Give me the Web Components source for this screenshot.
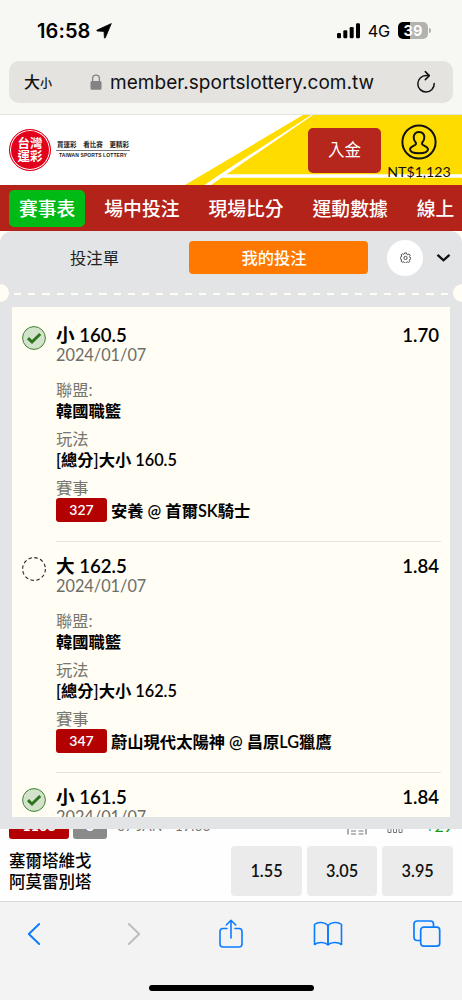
<!DOCTYPE html>
<html lang="zh-Hant">
<head>
<meta charset="utf-8">
<meta name="viewport" content="width=device-width, initial-scale=1">
<title>台灣運彩</title>
<style>
  body {
    margin: 0;
    width: 462px;
    height: 1000px;
    overflow: hidden;
    background: #fff;
    color: #0b0b0b;
    font-family: Lato, "Noto Sans CJK TC", sans-serif;
  }
</style>
</head>
<body>
<phone-screen>
  <status-bar slot="top" time="16:58" network="4G" battery="39"></status-bar>
  <address-bar slot="top">member.sportslottery.com.tw</address-bar>

  <site-header balance="NT$1,123">入金</site-header>
  <site-nav>
    <nav-item active>賽事表</nav-item>
    <nav-item>場中投注</nav-item>
    <nav-item>現場比分</nav-item>
    <nav-item>運動數據</nav-item>
    <nav-item>線上</nav-item>
  </site-nav>

  <bet-panel>
    <bet-item status="won" pick="小 160.5" odds="1.70" date="2024/01/07" league="韓國職籃" market="[總分]大小 160.5" code="327">安養 @ 首爾SK騎士</bet-item>
    <bet-item status="open" pick="大 162.5" odds="1.84" date="2024/01/07" league="韓國職籃" market="[總分]大小 162.5" code="347">蔚山現代太陽神 @ 昌原LG獵鷹</bet-item>
    <bet-item status="won" pick="小 161.5" odds="1.84" date="2024/01/07"></bet-item>
  </bet-panel>

  <match-row code="1103" count="3" time="07 JAN - 19:00" more="+29">
    <span slot="home">塞爾塔維戈</span>
    <span slot="away">阿莫雷別塔</span>
    <odds-button>1.55</odds-button>
    <odds-button>3.05</odds-button>
    <odds-button>3.95</odds-button>
  </match-row>

  <browser-toolbar slot="bottom"></browser-toolbar>
</phone-screen>

<script>
const ICONS = {
  location: ['0 0 16 16', '<path d="M15.300 .6 9.300 14.800c-.2.500-.9.400-.9-.1L8 8.400 1.200 8c-.5 0-.6-.7-.1-.9z" fill="currentColor" stroke="currentColor" stroke-width=".8" stroke-linejoin="round"/>'],
  signal: ['0 0 24 16', '<g fill="currentColor"><rect x="0" y="10" width="4" height="5.300" rx="1.200"/><rect x="6.300" y="7.300" width="4" height="8" rx="1.200"/><rect x="12.700" y="4" width="4" height="11.300" rx="1.200"/><rect x="19" y=".3" width="4" height="15" rx="1.200"/></g>'],
  lock: ['0 0 12 16', '<path d="M2.600 7.500V4.500a3.400 3.400 0 0 1 6.800 0v3" fill="none" stroke="currentColor" stroke-width="1.300"/><rect x=".5" y="7" width="11" height="8.700" rx="1.500" fill="currentColor"/>'],
  reload: ['0 0 20 24', '<g fill="none" stroke="currentColor" stroke-width="1.500" stroke-linecap="round" stroke-linejoin="round"><path d="M13 5.600H10.200A8.200 8.200 0 1 0 18.200 13.500"/><path d="M9.300 1.600 13.300 5.600 9.300 9.600"/></g>'],
  user: ['0 0 36 36', '<g fill="none" stroke="currentColor" stroke-width="2"><circle cx="18" cy="18" r="16.600"/><path d="M18 8c-3.600 0-5.300 2.500-5.300 5.500 0 2.200.9 3.700 1.900 4.900.7.900.4 2-.5 2.600-2.300 1.300-5.100 2-5.100 4.300 0 2.500 4 4 9 4s9-1.500 9-4c0-2.300-2.800-3-5.100-4.300-.9-.6-1.200-1.700-.5-2.600 1-1.200 1.900-2.700 1.900-4.900C23.300 10.500 21.600 8 18 8z"/></g>'],
  gear: ['0 0 24 24', '<g fill="none" stroke="currentColor" stroke-width="2" stroke-linejoin="round"><path d="M10 2h4l.8 3 2 .9 2.700-1.600 2.700 2.900-1.500 2.500.8 2.100 2.200.6v3l-2.500.8-.9 2 1.200 2.200-2.800 2.400-2.300-1.300-2.200.9-.7 2.100h-3.500l-.8-2.400-2-.9-2.300 1.300-2.700-2.600 1.300-2.400-.9-2.100-2.100-.6v-3.400l2.400-.7.900-2.100-1.300-2.400 2.700-2.500 2.300 1.300 2-.8z"/><circle cx="12" cy="13" r="3.600"/></g>'],
  chevron: ['0 0 14 10', '<path d="M1 1.800 7 7.300l6-5.500" fill="none" stroke="currentColor" stroke-width="2.300"/>'],
  won: ['0 0 24 24', '<circle cx="12" cy="12" r="11.400" fill="#d3e2cb" stroke="#3b8430"/><path d="M6 12.200 10 16l8.200-8" fill="none" stroke="#2e741f" stroke-width="3"/>'],
  open: ['0 0 24 24', '<circle cx="12" cy="12" r="11.400" fill="none" stroke="#222" stroke-width="1.100" stroke-dasharray="3.500 2.468"/>'],
  field: ['0 0 20 20', '<path d="M1 4v15.500M19 4v15.500M4 16h5M11.500 16h5M4 19h5M11.500 19h5" fill="none" stroke="currentColor" stroke-width="1.200"/>'],
  stats: ['0 0 16 20', '<path d="M1 8v9.500h3V8M6.500 5v12.500h3V5M12 8v9.500h3V8" fill="none" stroke="currentColor" stroke-width="1"/>'],
  back: ['0 0 14 24', '<path d="M12.200 2 1.800 12l10.400 10" fill="none" stroke="currentColor" stroke-width="1.900" stroke-linecap="round" stroke-linejoin="round"/>'],
  forward: ['0 0 14 24', '<path d="M1.800 2 12.200 12 1.800 22" fill="none" stroke="currentColor" stroke-width="1.900" stroke-linecap="round" stroke-linejoin="round"/>'],
  share: ['0 0 24 30', '<g fill="none" stroke="currentColor" stroke-width="1.600" stroke-linecap="round" stroke-linejoin="round"><path d="M8 9.500H4A3 3 0 0 0 1 12.500V25a3 3 0 0 0 3 3h16a3 3 0 0 0 3-3V12.500a3 3 0 0 0-3-3h-4"/><path d="M12 19V1.500M7.300 6 12 1.300 16.700 6"/></g>'],
  book: ['0 0 30 26', '<path d="M15 4.500C12 1 5 .5 1.500 3.500v20C5 20.800 12 20.800 15 24c3-3.200 10-3.200 13.500-.5v-20C25 .5 18 1 15 4.500zV24" fill="none" stroke="currentColor" stroke-width="1.600" stroke-linejoin="round"/><path d="M15 4.500V24" stroke="currentColor" stroke-width="1.600"/>'],
  tabs: ['0 0 28 28', '<g fill="none" stroke="currentColor" stroke-width="1.700"><rect x="7.700" y="7.200" width="19" height="19" rx="3"/><path d="M7.700 20.500H4A3 3 0 0 1 1 17.500V4a3 3 0 0 1 3-3h13.500a3 3 0 0 1 3 3v3.200"/></g>'],
};

function icon(name, width, height) {
  const [viewBox, body] = ICONS[name];
  return `<svg class="${name}" width="${width}" height="${height}" viewBox="${viewBox}" aria-hidden="true">${body}</svg>`;
}

const RESET = '* { box-sizing: border-box; } svg { display: block; flex: none; }';

class PhoneScreen extends HTMLElement {
  constructor() {
    super();
    this.attachShadow({ mode: 'open' }).innerHTML = `
      <style>
        :host { display: flex; flex-direction: column; height: 1000px; }
        .top { flex: none; height: 115px; box-sizing: border-box; background: #f7f7f3; border-bottom: 1px solid #e3e4e0; }
        main { flex: 1; min-height: 0; overflow: hidden; background: #fefefe; }
      </style>
      <div class="top"><slot name="top"></slot></div>
      <main><slot></slot></main>
      <slot name="bottom"></slot>
    `;
  }
}

class StatusBar extends HTMLElement {
  connectedCallback() {
    this.attachShadow({ mode: 'open' }).innerHTML = `
      <style>
        ${RESET}
        :host { display: flex; align-items: center; height: 61px; padding: 0 31px 0 37px; font-family: Inter, sans-serif; color: #000; box-sizing: border-box; }
        .time { font-size: 20px; font-weight: 600; letter-spacing: .1px; }
        .location { margin-left: 5px; }
        .right { display: flex; align-items: center; margin-left: auto; }
        .network { margin: 0 8px 0 7px; font-size: 16.3px; letter-spacing: -.2px; }
        .battery { width: 30px; height: 17px; border-radius: 5px; background: linear-gradient(90deg, #000 39%, #b2b2af 39%); color: #fff; font-size: 14.5px; font-weight: 700; line-height: 17px; text-align: center; }
        .cap { width: 2px; height: 5px; margin-left: 1px; border-radius: 0 2px 2px 0; background: #b2b2af; }
      </style>
      <span class="time">${this.getAttribute('time')}</span>
      ${icon('location', 16, 16)}
      <div class="right">
        ${icon('signal', 24, 16)}
        <span class="network">${this.getAttribute('network')}</span>
        <span class="battery">${this.getAttribute('battery')}</span>
        <i class="cap"></i>
      </div>
    `;
  }
}

class AddressBar extends HTMLElement {
  constructor() {
    super();
    this.attachShadow({ mode: 'open' }).innerHTML = `
      <style>
        ${RESET}
        :host { display: flex; align-items: center; box-sizing: border-box; height: 42px; margin: 0 9px; padding: 0 17px 0 15px; border-radius: 10px; background: #e4e3e0; color: #111; font-family: Inter, "Noto Sans CJK TC", sans-serif; }
        .size { width: 66px; padding-top: 2px; font-size: 16px; font-weight: 500; line-height: 40px; }
        .size small { font-size: 12px; }
        .lock { color: #828282; }
        .url { margin-left: 8px; font-size: 19px; letter-spacing: .04px; white-space: nowrap; }
        .reload { margin-left: auto; }
      </style>
      <span class="size">大<small>小</small></span>
      ${icon('lock', 12, 16)}
      <span class="url"><slot></slot></span>
      ${icon('reload', 20, 24)}
    `;
  }
}

class SiteHeader extends HTMLElement {
  connectedCallback() {
    this.attachShadow({ mode: 'open' }).innerHTML = `
      <style>
        ${RESET}
        :host { display: block; height: 70px; background: #fff; }
        .wrap { display: grid; grid-template-columns: 1fr; height: 70px; }
        .wrap > * { grid-area: 1 / 1; }
        .content { display: flex; padding: 0 11px 0 9px; }
        .logo { display: grid; place-content: center; width: 42px; height: 42px; margin-top: 14px; border-radius: 50%; border: 1px solid #e2001a; background: #e2001a; box-shadow: inset 0 0 0 1px #fff; color: #fff; font-size: 12.5px; font-weight: 700; line-height: 13px; text-align: center; }
        .slogan { width: 74px; margin: 24px 0 0 5px; color: #222; text-align: center; white-space: nowrap; }
        .zh { display: flex; justify-content: space-between; height: 12px; padding: 0 1px; border-bottom: 1px solid #777; font-size: 6.5px; font-weight: 700; line-height: 11px; }
        .en { font: 700 5px/9px "Liberation Sans", sans-serif; letter-spacing: .1px; }
        button { width: 73px; height: 45px; margin: 13px 0 0 auto; padding: 0; border: 0; border-radius: 5px; background: #b5261c; color: #fff; font: inherit; font-size: 16.5px; line-height: 43px; }
        .account { display: flex; flex-direction: column; align-items: center; width: 64px; margin: 9px 0 0 6px; color: #111; }
        .balance { margin-top: 2px; font-size: 14.2px; line-height: 20px; }
      </style>
      <div class="wrap">
        <svg width="462" height="70" viewBox="0 0 462 70" aria-hidden="true">
          <path d="M303 0H462V70H185z" fill="#ffdc00"/>
          <path d="M311 0H313L226.500 59.300H462V62.700H221.500L211 70H204.500L219 60z" fill="#fff"/>
        </svg>
        <div class="content">
          <div class="logo">台灣<br>運彩</div>
          <div class="slogan">
            <div class="zh"><span>買運彩</span><span>看比賽</span><span>更精彩</span></div>
            <div class="en">TAIWAN SPORTS LOTTERY</div>
          </div>
          <button><slot></slot></button>
          <div class="account">
            ${icon('user', 36, 36)}
            <span class="balance">${this.getAttribute('balance')}</span>
          </div>
        </div>
      </div>
    `;
  }
}

class SiteNav extends HTMLElement {
  constructor() {
    super();
    this.attachShadow({ mode: 'open' }).innerHTML = `
      <style>
        :host { display: flex; align-items: center; gap: 9px; box-sizing: border-box; height: 46px; padding-left: 9px; overflow: hidden; background: #b3231a; }
      </style>
      <slot></slot>
    `;
  }
}

class NavItem extends HTMLElement {
  constructor() {
    super();
    this.attachShadow({ mode: 'open' }).innerHTML = `
      <style>
        :host { flex: none; height: 37px; padding: 0 10px; border-radius: 5px; color: #fff; font-size: 18.8px; font-weight: 500; line-height: 37px; white-space: nowrap; }
        :host([active]) { background: #00ba16; }
      </style>
      <slot></slot>
    `;
  }
}

class BetPanel extends HTMLElement {
  constructor() {
    super();
    this.attachShadow({ mode: 'open' }).innerHTML = `
      <style>
        ${RESET}
        :host { display: block; height: 598px; background: #fffdf4; }
        .panel { height: 100%; border-radius: 12px 12px 0 0; background: #e3e4e6; }
        .tabs { display: flex; align-items: center; height: 53px; padding-right: 11px; }
        .tab { flex: none; width: 189px; color: #222; font-size: 16.3px; line-height: 33px; text-align: center; }
        .tab.active { width: 179px; height: 33px; padding-right: 9px; border-radius: 4px; background: #ff7900; color: #fff; font-weight: 500; }
        .settings { display: grid; place-items: center; width: 36px; height: 36px; margin-left: 19px; border-radius: 50%; background: #fff; color: #444; }
        .chevron { margin-left: auto; color: #111; }
        .tear { display: flex; align-items: center; height: 18px; }
        .notch { width: 9px; height: 18px; border-radius: 0 9px 9px 0; background: #fffdf4; }
        .notch.end { border-radius: 9px 0 0 9px; }
        .dashes { flex: 1; height: 2px; margin: 2px 4px 0 5px; background: repeating-linear-gradient(90deg, #fffdf4 0 7.2px, transparent 7.2px 14.22px); }
        .list { height: 510px; margin: 5px 12px 0; padding-top: 4px; overflow: hidden; background: #fffdf4; }
      </style>
      <div class="panel">
        <div class="tabs">
          <span class="tab">投注單</span>
          <span class="tab active">我的投注</span>
          <span class="settings">${icon('gear', 11, 11)}</span>
          ${icon('chevron', 15, 10)}
        </div>
        <div class="tear"><i class="notch"></i><i class="dashes"></i><i class="notch end"></i></div>
        <div class="list"><slot></slot></div>
      </div>
    `;
  }
}

class BetItem extends HTMLElement {
  connectedCallback() {
    const get = (name) => this.getAttribute(name);
    // Details appear once the league is known
    const details = get('league') ? `
      <dl>
        <dt>聯盟:</dt><dd>${get('league')}</dd>
        <dt>玩法</dt><dd>${get('market')}</dd>
        <dt>賽事</dt><dd class="game"><span class="code">${get('code')}</span><slot></slot></dd>
      </dl>` : '';
    this.attachShadow({ mode: 'open' }).innerHTML = `
      <style>
        ${RESET}
        :host { display: flex; gap: 10px; box-sizing: border-box; height: 231px; padding: 0 9px 0 10px; font-size: 16.3px; }
        .status { padding-top: 15px; }
        .body { flex: 1; padding-top: 13px; border-bottom: 1px solid #e4e3dc; white-space: nowrap; }
        .head { display: flex; justify-content: space-between; height: 22px; padding-right: 2px; color: #000; font-size: 18.6px; font-weight: 600; line-height: 22px; }
        .date { height: 19px; color: #6d6d69; line-height: 18px; }
        dl { margin: 15px 0 0; }
        dt { height: 20px; color: #77776f; line-height: 19px; }
        dd { height: 21px; margin: 0 0 8px; color: #000; font-weight: 600; line-height: 21px; }
        .game { display: flex; align-items: center; height: 24px; margin: 0; }
        .code { width: 51px; height: 24px; margin-right: 4px; border-radius: 3px; background: #b30000; color: #fff; font-size: 14px; font-weight: 600; line-height: 24px; text-align: center; }
      </style>
      <div class="status">${icon(get('status'), 24, 24)}</div>
      <div class="body">
        <div class="head"><span>${get('pick')}</span><span>${get('odds')}</span></div>
        <div class="date">${get('date')}</div>
        ${details}
      </div>
    `;
  }
}

class MatchRow extends HTMLElement {
  connectedCallback() {
    const get = (name) => this.getAttribute(name);
    this.attachShadow({ mode: 'open' }).innerHTML = `
      <style>
        ${RESET}
        :host { display: block; height: 73px; padding: 0 9px; overflow: hidden; }
        .meta { display: flex; align-items: flex-start; height: 24px; margin-top: -14px; color: #777; font-size: 14px; line-height: 22px; white-space: nowrap; }
        .chip { width: 60px; height: 24px; margin-right: 4px; border-radius: 3px; background: #b30000; color: #fff; font-size: 14.5px; font-weight: 700; text-align: center; }
        .chip.count { width: 34px; margin-right: 10px; background: #8a8a8a; }
        .field { margin: 0 20px 0 auto; }
        .more { width: 32px; margin-left: 18px; color: #159a15; font-size: 16px; text-align: right; }
        .line { display: flex; justify-content: space-between; margin-top: 7px; }
        .teams { display: flex; flex-direction: column; padding-top: 5px; color: #000; font-size: 16.5px; font-weight: 500; line-height: 21px; }
        .odds { display: flex; gap: 5px; }
      </style>
      <div class="meta">
        <span class="chip">${get('code')}</span>
        <span class="chip count">${get('count')}</span>
        <span>${get('time')}</span>
        ${icon('field', 20, 20)}
        ${icon('stats', 16, 20)}
        <span class="more">${get('more')}</span>
      </div>
      <div class="line">
        <div class="teams"><slot name="home"></slot><slot name="away"></slot></div>
        <div class="odds"><slot></slot></div>
      </div>
    `;
  }
}

class OddsButton extends HTMLElement {
  constructor() {
    super();
    this.attachShadow({ mode: 'open' }).innerHTML = `
      <style>
        :host { display: block; width: 70.6px; height: 50px; border-radius: 4px; background: #ebebeb; color: #111; font-size: 16.3px; font-weight: 600; line-height: 50px; text-align: center; }
      </style>
      <slot></slot>
    `;
  }
}

class BrowserToolbar extends HTMLElement {
  constructor() {
    super();
    this.attachShadow({ mode: 'open' }).innerHTML = `
      <style>
        ${RESET}
        :host { display: flex; flex-direction: column; align-items: center; flex: none; height: 99px; box-sizing: border-box; border-top: 1px solid #d9d9d9; background: #f3f3f3; }
        .icons { display: flex; align-items: center; width: 100%; height: 63px; padding-left: 27px; color: #0a7cff; }
        .forward { margin: 0 78px 0 86px; color: #bdbdbd; }
        .book { margin: 0 70px; }
        .home { width: 165px; height: 6px; margin-top: 20px; border-radius: 3px; background: #000; }
      </style>
      <div class="icons">
        ${icon('back', 14, 24)}
        ${icon('forward', 14, 24)}
        ${icon('share', 24, 30)}
        ${icon('book', 30, 26)}
        ${icon('tabs', 28, 28)}
      </div>
      <i class="home"></i>
    `;
  }
}

customElements.define('phone-screen', PhoneScreen);
customElements.define('status-bar', StatusBar);
customElements.define('address-bar', AddressBar);
customElements.define('site-header', SiteHeader);
customElements.define('site-nav', SiteNav);
customElements.define('nav-item', NavItem);
customElements.define('bet-panel', BetPanel);
customElements.define('bet-item', BetItem);
customElements.define('match-row', MatchRow);
customElements.define('odds-button', OddsButton);
customElements.define('browser-toolbar', BrowserToolbar);
</script>
</body>
</html>
